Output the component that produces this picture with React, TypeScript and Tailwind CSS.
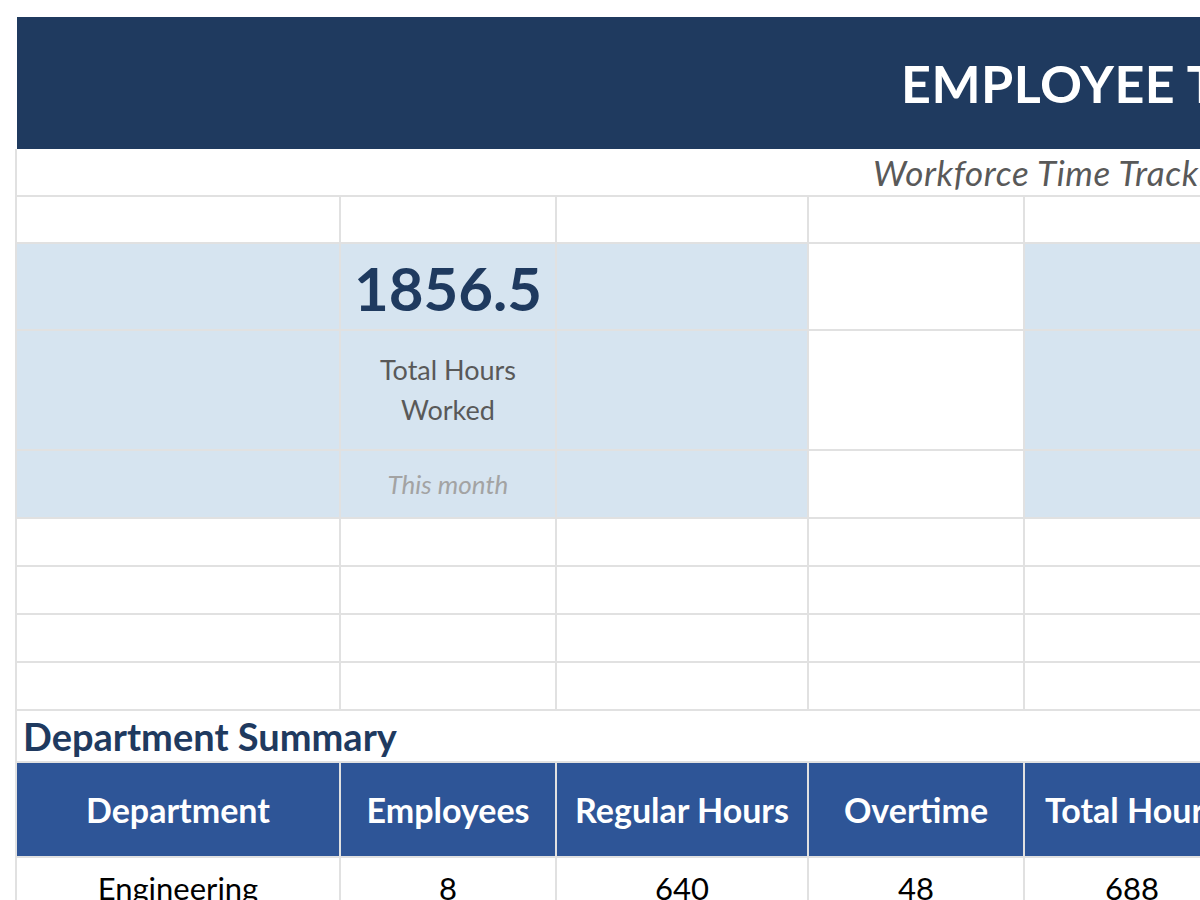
import React from "react";

const font = { fontFamily: "Lato, 'Open Sans', sans-serif" };

function Row({ cells, h }: { cells: { bg?: string; content?: React.ReactNode }[]; h: string }) {
  return (
    <>
      {cells.map((c, i) => (
        <div key={i} className={`${h} ${c.bg ?? "bg-white"} flex items-center justify-center`}>
          {c.content}
        </div>
      ))}
    </>
  );
}

export default function App() {
  const blue = "bg-[#d6e4f0]";
  const white = "bg-white";
  const empty = Array.from({ length: 6 }, () => ({ bg: white }));
  return (
    <div className="w-[1200px] h-[900px] overflow-hidden bg-white pt-[17px] pl-[15px]" style={font}>
      <div className="ml-[2px] h-[132px] w-[1500px] bg-[#1f3a5f] flex items-center pl-[884px]">
        <span className="text-white font-bold text-[52px] whitespace-nowrap leading-none tracking-[0.5px]">
          EMPLOYEE TIMESHEET DASHBOARD
        </span>
      </div>
      <div className="grid w-[1480px] grid-cols-[322px_214px_250px_214px_214px_250px] gap-[2px] bg-[#e1e1e1] pl-[2px]">
        <div className="col-span-6 h-[46px] bg-white flex items-center pl-[856px]">
          <span className="italic text-[#595959] text-[35px] whitespace-nowrap leading-none tracking-[0.6px]">
            Workforce Time Tracking &amp; Attendance Overview
          </span>
        </div>
        <Row h="h-[45px]" cells={empty} />
        <Row
          h="h-[85px]"
          cells={[
            { bg: blue },
            {
              bg: blue,
              content: <span className="text-[#1f3a5f] font-bold text-[60px] leading-none pt-[3px]">1856.5</span>,
            },
            { bg: blue },
            { bg: white },
            { bg: blue },
            { bg: blue },
          ]}
        />
        <Row
          h="h-[118px]"
          cells={[
            { bg: blue },
            {
              bg: blue,
              content: (
                <span className="text-[#595959] text-[27px] leading-[40px] text-center">
                  Total Hours
                  <br />
                  Worked
                </span>
              ),
            },
            { bg: blue },
            { bg: white },
            { bg: blue },
            { bg: blue },
          ]}
        />
        <Row
          h="h-[66px]"
          cells={[
            { bg: blue },
            {
              bg: blue,
              content: <span className="italic text-[#a3a3a3] text-[26px] leading-none">This month</span>,
            },
            { bg: blue },
            { bg: white },
            { bg: blue },
            { bg: blue },
          ]}
        />
        <Row h="h-[46px]" cells={empty} />
        <Row h="h-[46px]" cells={empty} />
        <Row h="h-[46px]" cells={empty} />
        <Row h="h-[46px]" cells={empty} />
        <div className="col-span-6 h-[50px] bg-white flex items-end pl-[6px] pb-[6px]">
          <span className="text-[#1f3a5f] font-bold text-[38px] leading-none whitespace-nowrap">Department Summary</span>
        </div>
        {["Department", "Employees", "Regular Hours", "Overtime", "Total Hours", "Attendance"].map((t) => (
          <div key={t} className="h-[93px] bg-[#2e5597] flex items-center justify-center">
            <span className="text-white font-bold text-[34px] whitespace-nowrap">{t}</span>
          </div>
        ))}
        {["Engineering", "8", "640", "48", "688", "98%"].map((t, i) => (
          <div key={i} className="h-[60px] bg-white flex items-center justify-center">
            <span className="text-black text-[31px] whitespace-nowrap">{t}</span>
          </div>
        ))}
      </div>
    </div>
  );
}
